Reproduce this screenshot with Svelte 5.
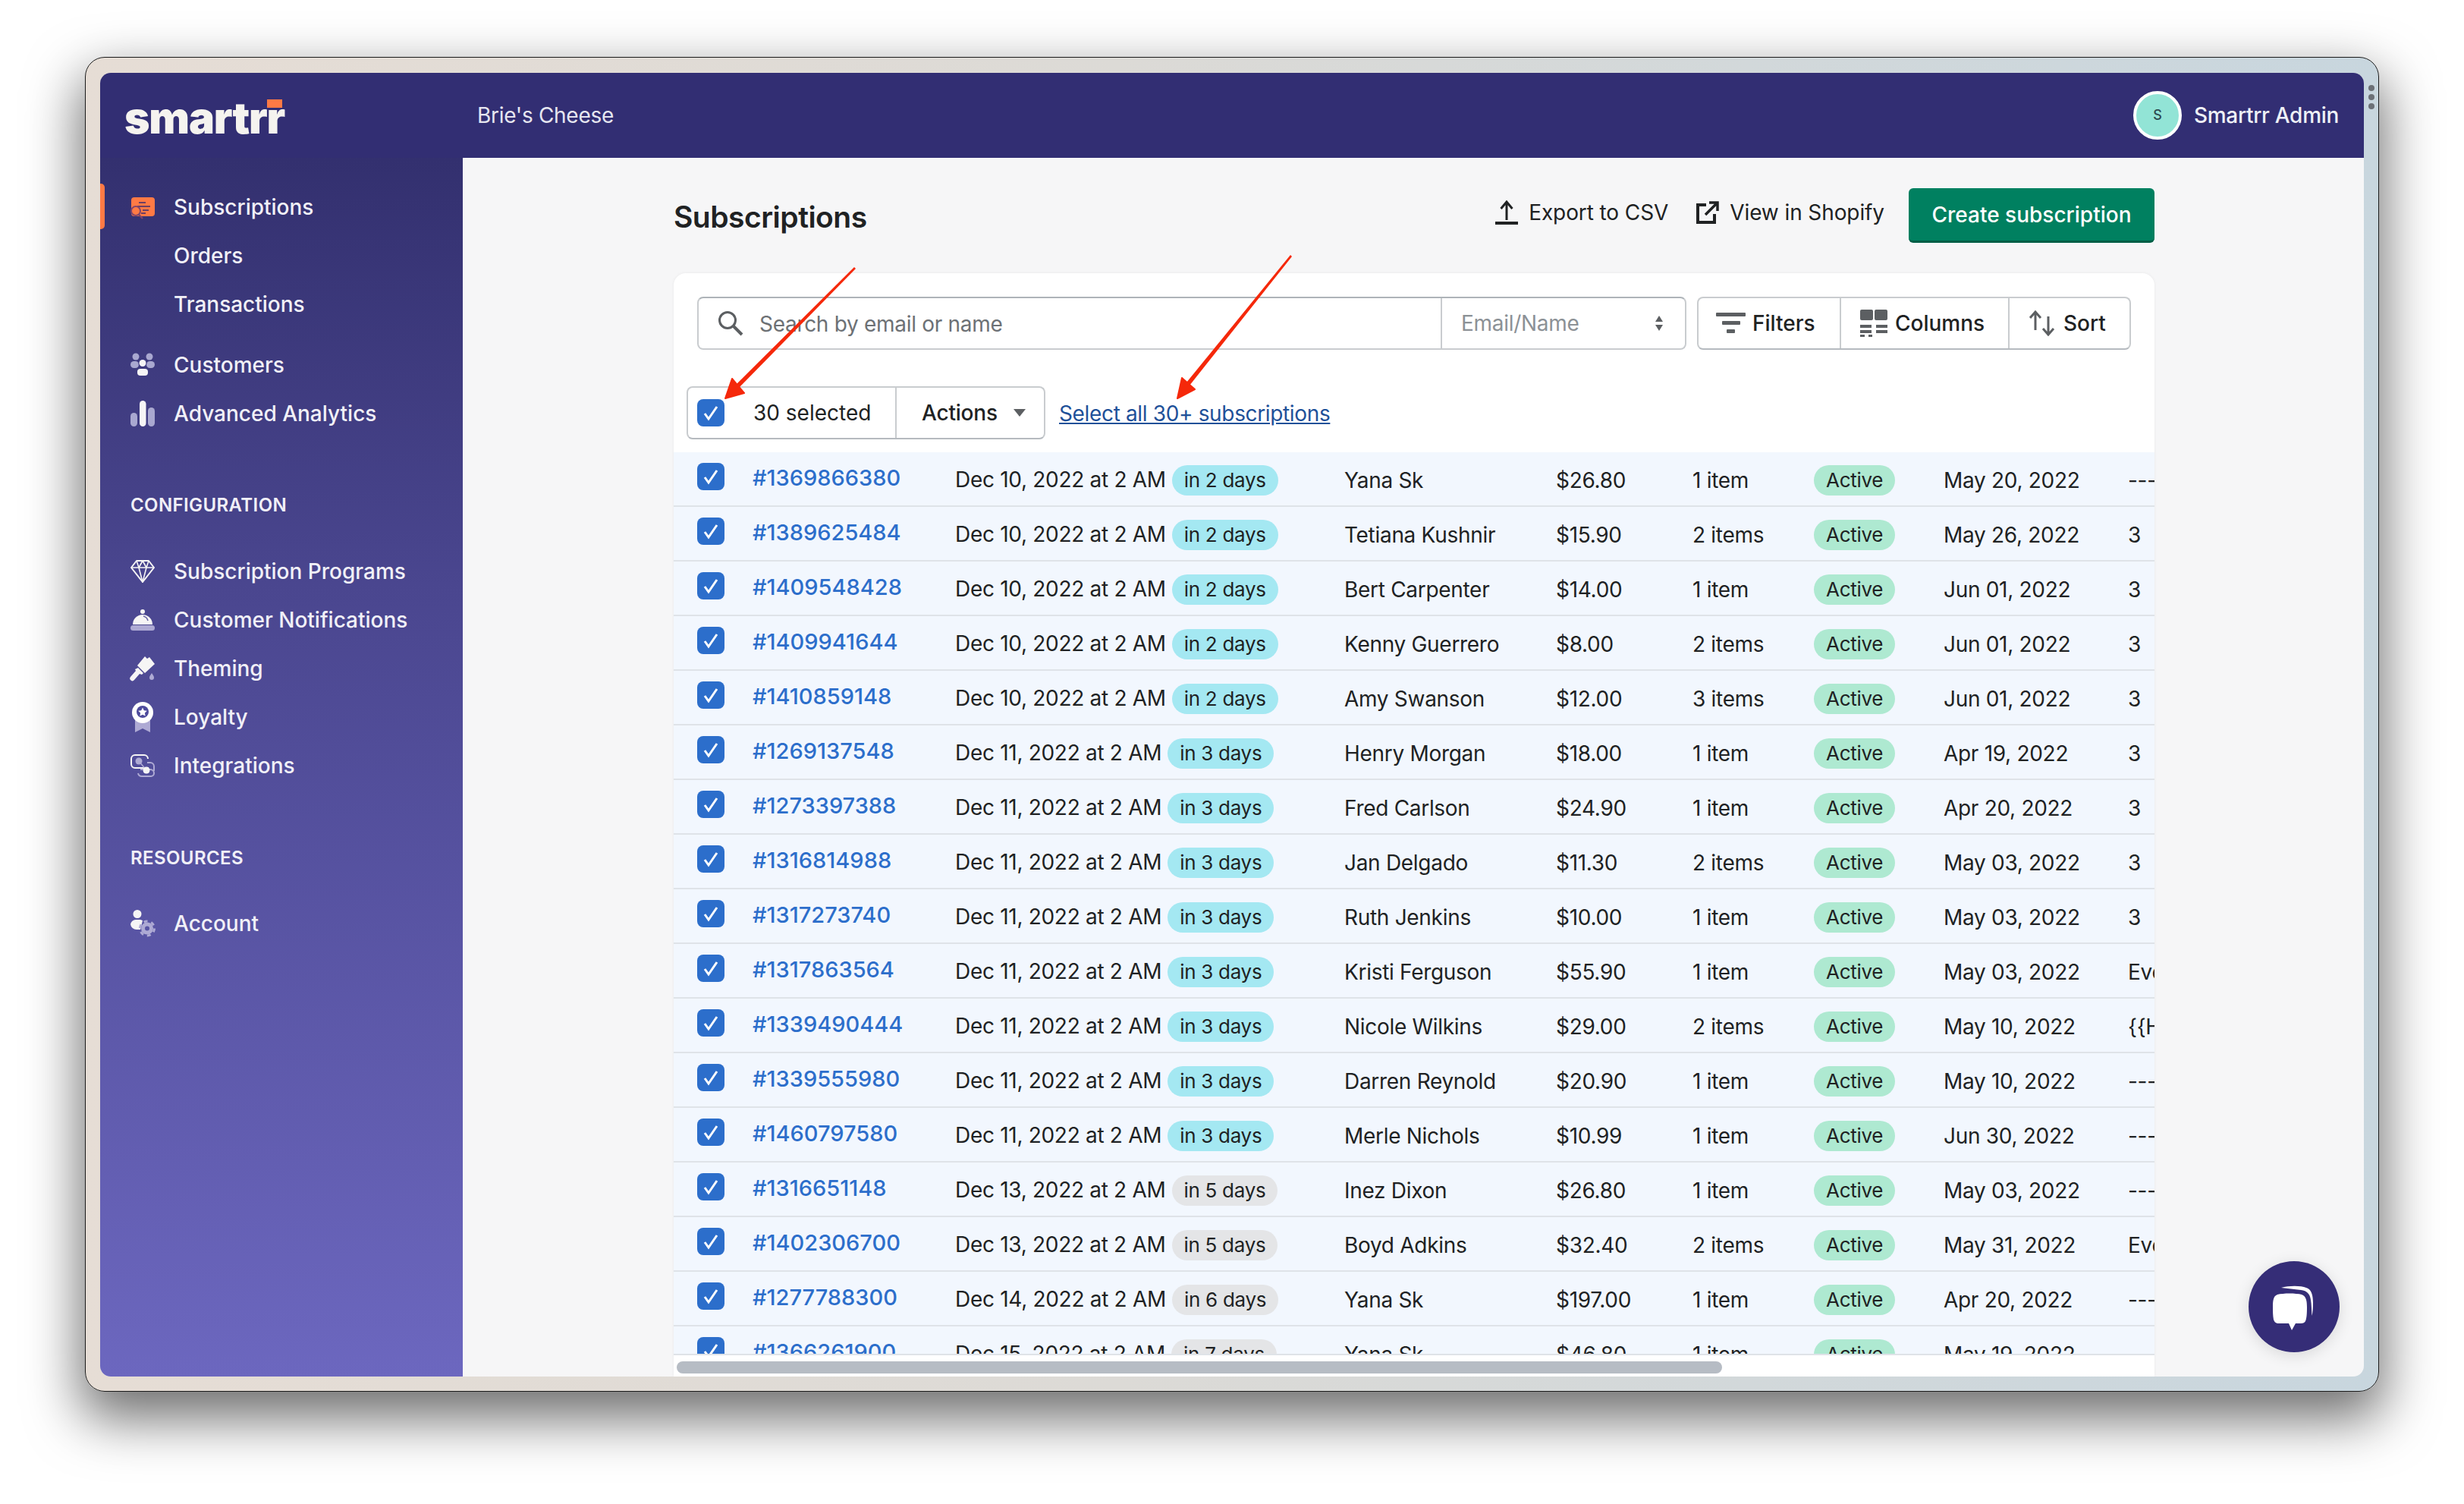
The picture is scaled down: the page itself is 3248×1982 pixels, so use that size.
<script>
  const rows = [
    ["1369866380", "Dec 10", 2, "Yana Sk", "$26.80", "1 item", "May 20, 2022", "---"],
    ["1389625484", "Dec 10", 2, "Tetiana Kushnir", "$15.90", "2 items", "May 26, 2022", "3"],
    ["1409548428", "Dec 10", 2, "Bert Carpenter", "$14.00", "1 item", "Jun 01, 2022", "3"],
    ["1409941644", "Dec 10", 2, "Kenny Guerrero", "$8.00", "2 items", "Jun 01, 2022", "3"],
    ["1410859148", "Dec 10", 2, "Amy Swanson", "$12.00", "3 items", "Jun 01, 2022", "3"],
    ["1269137548", "Dec 11", 3, "Henry Morgan", "$18.00", "1 item", "Apr 19, 2022", "3"],
    ["1273397388", "Dec 11", 3, "Fred Carlson", "$24.90", "1 item", "Apr 20, 2022", "3"],
    ["1316814988", "Dec 11", 3, "Jan Delgado", "$11.30", "2 items", "May 03, 2022", "3"],
    ["1317273740", "Dec 11", 3, "Ruth Jenkins", "$10.00", "1 item", "May 03, 2022", "3"],
    ["1317863564", "Dec 11", 3, "Kristi Ferguson", "$55.90", "1 item", "May 03, 2022", "Every"],
    ["1339490444", "Dec 11", 3, "Nicole Wilkins", "$29.00", "2 items", "May 10, 2022", "{{H"],
    ["1339555980", "Dec 11", 3, "Darren Reynold", "$20.90", "1 item", "May 10, 2022", "---"],
    ["1460797580", "Dec 11", 3, "Merle Nichols", "$10.99", "1 item", "Jun 30, 2022", "---"],
    ["1316651148", "Dec 13", 5, "Inez Dixon", "$26.80", "1 item", "May 03, 2022", "---"],
    ["1402306700", "Dec 13", 5, "Boyd Adkins", "$32.40", "2 items", "May 31, 2022", "Every"],
    ["1277788300", "Dec 14", 6, "Yana Sk", "$197.00", "1 item", "Apr 20, 2022", "---"],
    ["1366261900", "Dec 15", 7, "Yana Sk", "$46.80", "1 item", "May 19, 2022", "---"],
  ];
</script>

<div class="page">
  <div class="frame">
    <div class="dots"><i></i><i></i><i></i></div>
    <div class="app">
      <header class="topbar">
        <div class="logo"><span class="logo-mark"></span>smartrr</div>
        <div class="shop">Brie's Cheese</div>
        <div class="user">
          <div class="avatar">S</div>
          <span>Smartrr Admin</span>
        </div>
      </header>

      <div class="body">
        <nav class="sidebar">
          <a class="nav active">
            <svg width="32" height="32" viewBox="0 0 32 32">
              <rect x="1" y="3" width="31" height="25" rx="4" fill="#ff7a45" />
              <path d="M11 10h9M9 15h17M16 20h8M14 24h6" stroke="#6d3f63" stroke-width="2" fill="none" />
              <circle cx="7" cy="21" r="6" fill="#ff7a45" stroke="#80456a" stroke-width="2" />
              <path d="M11 26l5 5" stroke="#80456a" stroke-width="2.4" />
            </svg>
            Subscriptions
          </a>
          <a class="nav"><span class="blank"></span>Orders</a>
          <a class="nav"><span class="blank"></span>Transactions</a>

          <a class="nav group">
            <svg width="32" height="32" viewBox="0 0 32 32">
              <circle cx="7" cy="5" r="4.5" fill="#a9a8d0" />
              <circle cx="25" cy="5" r="4.5" fill="#a9a8d0" />
              <rect x="0" y="11" width="11" height="9" rx="4.5" fill="#a9a8d0" />
              <rect x="21" y="11" width="11" height="9" rx="4.5" fill="#a9a8d0" />
              <circle cx="16" cy="13.5" r="5.5" fill="#3a3680" />
              <circle cx="16" cy="13.5" r="4.5" fill="#f6f5f5" />
              <path d="M9 25a4 4 0 0 1 4-4h6a4 4 0 0 1 4 4v1a4 4 0 0 1-4 4h-6a4 4 0 0 1-4-4z" fill="#f6f5f5" />
            </svg>
            Customers
          </a>
          <a class="nav">
            <svg width="32" height="34" viewBox="0 0 32 34">
              <rect x="0" y="16" width="9" height="18" rx="4.5" fill="#a9a8d0" />
              <rect x="12" y="0" width="8.5" height="34" rx="4.25" fill="#f6f5f5" />
              <rect x="23" y="9" width="9" height="25" rx="4.5" fill="#a9a8d0" />
            </svg>
            Advanced Analytics
          </a>

          <div class="label first">Configuration</div>
          <a class="nav">
            <svg width="32" height="32" viewBox="0 0 32 32" fill="none" stroke="#f6f5f5" stroke-width="2" stroke-linejoin="round">
              <path d="M8 2h16l7 9-15 19L1 11z" />
              <path d="M1 11h30M8 2l3 9 5 19 5-19 3-9M11 11l5-9 5 9" stroke-width="1.6" />
            </svg>
            Subscription Programs
          </a>
          <a class="nav">
            <svg width="32" height="28" viewBox="0 0 32 28">
              <circle cx="16" cy="3" r="3" fill="#f6f5f5" />
              <path d="M3 20a13 13 0 0 1 26 0z" fill="#f6f5f5" />
              <path d="M17 9a8 8 0 0 1 6 6" stroke="#6b67a6" stroke-width="1.6" fill="none" />
              <rect x="0" y="21" width="32" height="7" rx="3.5" fill="#aeaad4" />
            </svg>
            Customer Notifications
          </a>
          <a class="nav">
            <svg width="32" height="32" viewBox="0 0 32 32">
              <path d="M19 0l3 3 3-2 7 9-13 12-10-10z" fill="#f6f5f5" />
              <path d="M10 15l7 7-2 2-3-1-7 8a3 3 0 0 1-5-4l7-8-1-2z" fill="#f6f5f5" />
              <path d="M28 22c2 3 3 4.500 3 6a3 3 0 0 1-6 0c0-1.500 1-3 3-6z" fill="#aeaad4" />
            </svg>
            Theming
          </a>
          <a class="nav">
            <svg width="32" height="40" viewBox="0 0 32 40">
              <path d="M6 24h20v16l-10-5-10 5z" fill="#aeaad4" />
              <circle cx="16" cy="14" r="14" fill="#fff" />
              <circle cx="16" cy="13" r="8" fill="#4d4a9c" />
              <path d="M16 7.500l1.800 3.700 4 .6-2.900 2.800.7 4-3.600-1.900-3.600 1.900.7-4-2.900-2.800 4-.6z" fill="#fff" />
            </svg>
            Loyalty
          </a>
          <a class="nav">
            <svg width="32" height="30" viewBox="0 0 32 30" fill="none">
              <path d="M13 20h13a5 5 0 0 1 5 5v0a4 4 0 0 1-4 4H15a5 5 0 0 1-5-4M31 22V16a5 5 0 0 0-5-5h-4" stroke="#aeaad4" stroke-width="2" />
              <path d="M24 18H6a5 5 0 0 1-5-5V6a5 5 0 0 1 5-5h12a5 5 0 0 1 5 5" stroke="#f6f5f5" stroke-width="2" />
              <circle cx="11" cy="9" r="4.500" fill="#aeaad4" />
              <path d="M11 9l10 12" stroke="#aeaad4" stroke-width="1.500" />
              <circle cx="21" cy="21" r="4.500" fill="#f6f5f5" />
            </svg>
            Integrations
          </a>

          <div class="label">Resources</div>
          <a class="nav">
            <svg width="32" height="36" viewBox="0 0 32 36">
              <circle cx="9" cy="5.500" r="5.500" fill="#f6f5f5" />
              <path d="M0 19a7 7 0 0 1 7-6h6l3 1-3 12h-5a8 8 0 0 1-8-7z" fill="#f6f5f5" />
              <circle cx="22" cy="24.500" r="5.500" fill="none" stroke="#aeaad4" stroke-width="5" />
              <circle cx="22" cy="24.500" r="9.500" fill="none" stroke="#aeaad4" stroke-width="3" stroke-dasharray="5 5" />
            </svg>
            Account
          </a>
        </nav>

        <main class="main">
          <div class="page-head">
            <h1>Subscriptions</h1>
            <div class="head-actions">
              <span class="plain">
                <svg width="30" height="32" viewBox="0 0 30 32">
                  <path d="M15 26V4M7.500 11L15 2l7.500 9" fill="none" stroke="#202223" stroke-width="3" />
                  <rect x="0" y="28" width="30" height="4" fill="#202223" />
                </svg>
                Export to CSV
              </span>
              <span class="plain">
                <svg width="30" height="30" viewBox="0 0 30 30" fill="none" stroke="#202223" stroke-width="4">
                  <path d="M13 5H2v23h22V17" />
                  <path d="M12 18L27 3M17 2h11v11" stroke-width="3.500" />
                </svg>
                View in Shopify
              </span>
              <button class="primary">Create subscription</button>
            </div>
          </div>

          <section class="card">
            <div class="filters">
              <div class="search">
                <svg class="search-icon" width="34" height="34" viewBox="0 0 34 34" fill="none" stroke="#5c5f62" stroke-width="3">
                  <circle cx="13" cy="13" r="10.500" />
                  <path d="M21 21l11 11" stroke-width="4" />
                </svg>
                <span class="placeholder">Search by email or name</span>
                <div class="select">
                  <span>Email/Name</span>
                  <svg width="12" height="20" viewBox="0 0 12 20" fill="#5c5f62">
                    <path d="M6 0l5 8H1zM6 20l-5-8h10z" />
                  </svg>
                </div>
              </div>
              <div class="btn-group">
                <button class="b-filters">
                  <svg width="39" height="28" viewBox="0 0 39 28" fill="#5c5f62">
                    <rect width="39" height="5" rx="1" />
                    <rect x="8" y="11" width="24" height="5" rx="1" />
                    <rect x="14" y="22" width="11" height="5" rx="1" />
                  </svg>
                  Filters
                </button>
                <button class="b-columns">
                  <svg width="36" height="36" viewBox="0 0 36 36" fill="#5c5f62">
                    <rect width="17" height="14" rx="2" />
                    <rect x="19" width="17" height="14" rx="2" />
                    <path d="M0 20h15v4H0zM21 20h15v4H21zM0 27h15v4H0zM21 27h15v4H21zM0 33h6v3H0zM11 33h5v3h-5z" />
                  </svg>
                  Columns
                </button>
                <button class="b-sort">
                  <svg width="34" height="34" viewBox="0 0 34 34" fill="none" stroke="#5c5f62" stroke-width="3">
                    <path d="M8 26V3M1 10l7-8 7 8" />
                    <path d="M25 8v23M18 24l7 8 7-8" />
                  </svg>
                  Sort
                </button>
              </div>
            </div>

            <div class="bulk">
              <div class="bulk-group">
                <div class="bulk-count">
                  <span class="check">
                    <svg width="24" height="24" viewBox="0 0 24 24" fill="none" stroke="#fff" stroke-width="3"><path d="M4 13l5 7 11-16" /></svg>
                  </span>
                  <span>30 selected</span>
                </div>
                <div class="bulk-actions">
                  Actions
                  <svg width="16" height="10" viewBox="0 0 16 10" fill="#5c5f62"><path d="M0 0h16l-8 10z" /></svg>
                </div>
              </div>
              <a class="select-all">Select all 30+ subscriptions</a>
            </div>

            <div class="table">
              {#each rows as r}
                <div class="row">
                  <div class="cell-check">
                    <span class="check">
                      <svg width="24" height="24" viewBox="0 0 24 24" fill="none" stroke="#fff" stroke-width="3"><path d="M4 13l5 7 11-16" /></svg>
                    </span>
                  </div>
                  <a class="order">#{r[0]}</a>
                  <div>{r[1]}, 2022 at 2 AM<span class="badge" class:soon={r[2] < 5}>in {r[2]} days</span></div>
                  <div>{r[3]}</div>
                  <div>{r[4]}</div>
                  <div>{r[5]}</div>
                  <div><span class="badge active">Active</span></div>
                  <div>{r[6]}</div>
                  <div>{r[7]}</div>
                </div>
              {/each}
            </div>
            <div class="scroll"><div class="thumb"></div></div>
          </section>
        </main>
      </div>

      <div class="chat">
        <svg width="64" height="62" viewBox="0 0 64 62" fill="#fff">
          <path d="M15 6c10-3 26-3 33 0 7 2 9 10 9 20 0 7-.5 13-1.500 17-.5-8-.5-15-1.500-21-1-8-5-12-13-13-9-1-17-2-26-3z" />
          <path d="M10 15c8-2 24-2 32 0 6 2 7 8 7 17 0 8-.5 15-2 18-1 2-3 3-6 3H34l-5 9-4-9H12c-4 0-6-2-7-5-1-5-1-11-1-17 0-9 1-14 6-16z" />
        </svg>
      </div>
    </div>
  </div>

  <svg class="arrows" width="3248" height="1982" viewBox="0 0 3248 1982">
    <path d="M1128 354L975 510 971 506 1126 352z" fill="#f5280a" />
    <path d="M956 525L965 499 981 518z" fill="#f5280a" stroke="#f5280a" stroke-width="2" stroke-linejoin="round" />
    <path d="M1703 338L1568 508 1564 504 1701 336z" fill="#f5280a" />
    <path d="M1552 525L1558 498 1575 513z" fill="#f5280a" stroke="#f5280a" stroke-width="2" stroke-linejoin="round" />
  </svg>
</div>

<style>
  :global(body) {
    margin: 0;
    background: #fff;
  }

  .page {
    position: relative;
    width: 3248px;
    height: 1982px;
    padding: 75px 112px 0;
    box-sizing: border-box;
    font-family: Inter, "Liberation Sans", sans-serif;
    font-size: 28px;
    color: #202223;
    overflow: hidden;
  }

  .frame {
    position: relative;
    width: 3024px;
    height: 1759px;
    box-sizing: border-box;
    padding: 20px 19px 19px;
    border: 1px solid #1a1a1a;
    border-radius: 26px;
    background: linear-gradient(90deg, #e6ddd5, #dcdad6 45%, #c8d6de);
    box-shadow: 0 30px 70px 6px rgba(0, 0, 0, 0.56);
  }

  .dots {
    position: absolute;
    right: 5px;
    top: 36px;
    display: flex;
    flex-direction: column;
    gap: 4px;
  }
  .dots i {
    width: 8px;
    height: 8px;
    border-radius: 50%;
    background: #6c7076;
  }

  .app {
    position: relative;
    height: 100%;
    border-radius: 14px;
    overflow: hidden;
    display: flex;
    flex-direction: column;
    background: #f6f6f7;
  }

  .topbar {
    flex: 0 0 112px;
    display: flex;
    align-items: center;
    background: #322e73;
    color: #eef0f6;
  }

  .logo {
    position: relative;
    width: 465px;
    padding-left: 32px;
    box-sizing: border-box;
    font-size: 57px;
    font-weight: 900;
    letter-spacing: -1.2px;
    color: #f5f3ef;
    line-height: 56px;
    margin-top: 8px;
  }
  .logo-mark {
    position: absolute;
    left: 220px;
    top: 3px;
    width: 20px;
    height: 11px;
    background: #ff7a45;
  }

  .shop {
    margin-left: 32px;
    flex: 1;
    color: #e6e6f0;
    letter-spacing: -0.3px;
    margin-top: -1px;
  }

  .user {
    display: flex;
    align-items: center;
    gap: 16px;
    padding-right: 33px;
    font-weight: 500;
    letter-spacing: -0.3px;
    margin-top: -1px;
  }
  .avatar {
    width: 64px;
    height: 64px;
    box-sizing: border-box;
    border: 4px solid #fff;
    border-radius: 50%;
    background: #92e4d6;
    color: #2e4a50;
    font-size: 18px;
    display: flex;
    align-items: center;
    justify-content: center;
  }

  .body {
    flex: 1;
    display: flex;
    min-height: 0;
  }

  .sidebar {
    flex: 0 0 478px;
    box-sizing: border-box;
    padding-top: 33px;
    background: linear-gradient(180deg, #33306f 0%, #4a468f 35%, #6c67bf 100%);
    color: #f1f0f7;
  }

  .nav {
    position: relative;
    height: 64px;
    display: flex;
    align-items: center;
    gap: 25px;
    padding-left: 40px;
    font-weight: 500;
  }
  .nav.group {
    margin-top: 16px;
  }
  .nav svg {
    flex: 0 0 32px;
    overflow: visible;
  }
  .nav.active::before {
    content: "";
    position: absolute;
    left: 0;
    top: 1px;
    width: 6px;
    height: 60px;
    border-radius: 0 5px 5px 0;
    background: #ff7a45;
  }
  .blank {
    width: 32px;
  }

  .label {
    margin: 73px 0 37px 40px;
    height: 34px;
    line-height: 34px;
    font-size: 24px;
    font-weight: 600;
    letter-spacing: 0.4px;
    text-transform: uppercase;
  }
  .label.first {
    margin-top: 72px;
    margin-bottom: 38px;
  }

  .main {
    flex: 1;
    min-width: 0;
    padding: 40px 276px 0 278px;
  }

  .page-head {
    display: flex;
    align-items: center;
    justify-content: space-between;
    height: 72px;
  }
  h1 {
    margin: 0 0 -2px;
    font-size: 39px;
    font-weight: 600;
    letter-spacing: -0.5px;
  }

  .head-actions {
    display: flex;
    align-items: center;
  }
  .plain {
    display: flex;
    align-items: center;
    gap: 14px;
    margin-right: 37px;
    margin-top: -8px;
    letter-spacing: -0.1px;
  }
  .plain + .plain {
    margin-right: 32px;
  }

  button {
    font: inherit;
    color: inherit;
    font-weight: 500;
  }

  .primary {
    width: 324px;
    height: 72px;
    padding: 0;
    border: 0;
    border-bottom: 3px solid #005e46;
    border-radius: 6px;
    background: #008060;
    color: #fff;
  }

  .card {
    margin-top: 40px;
    height: 1454px;
    border-radius: 16px 16px 0 0;
    background: #fff;
    box-shadow: 0 0 4px rgba(23, 24, 24, 0.06);
    overflow: hidden;
  }

  .filters {
    display: flex;
    gap: 14px;
    padding: 31px 31px 0 31px;
  }

  .search {
    flex: 0 0 1304px;
    height: 70px;
    box-sizing: border-box;
    border: 2px solid #c9cccf;
    border-top-color: #aeb4b9;
    border-radius: 8px;
    display: flex;
    align-items: center;
    padding-left: 25px;
  }
  .search-icon {
    flex: none;
  }
  .placeholder {
    flex: 1;
    margin-left: 21px;
    color: #6d7175;
    letter-spacing: -0.3px;
    margin-top: 2px;
  }

  .select {
    flex: 0 0 320px;
    height: 100%;
    border-left: 2px solid #c9cccf;
    display: flex;
    align-items: center;
    justify-content: space-between;
    color: #8c9196;
    letter-spacing: -0.3px;
  }
  .select span {
    margin-left: 25px;
  }
  .select svg {
    margin-right: 28px;
  }

  .btn-group {
    display: flex;
    height: 70px;
    width: 572px;
    box-sizing: border-box;
    border: 2px solid #c9cccf;
    border-bottom-color: #b5babf;
    border-radius: 8px;
  }
  .btn-group button {
    display: flex;
    align-items: center;
    padding: 0;
    border: 0;
    background: none;
    border-right: 2px solid #c9cccf;
    box-sizing: border-box;
  }
  .btn-group button:last-child {
    border-right: 0;
  }
  .btn-group .b-filters {
    width: 188px;
    gap: 9px;
    padding-left: 23px;
  }
  .btn-group .b-columns {
    width: 222px;
    gap: 10px;
    padding-left: 25px;
  }
  .btn-group .b-sort {
    flex: 1;
    gap: 11px;
    padding-left: 26px;
  }

  .bulk {
    display: flex;
    align-items: center;
    gap: 18px;
    padding: 48px 0 17px 17px;
  }
  .bulk-group {
    display: flex;
    width: 473px;
    height: 70px;
    box-sizing: border-box;
    border: 2px solid #c9cccf;
    border-bottom-color: #b5babf;
    border-radius: 8px;
  }
  .bulk-count {
    width: 275px;
    display: flex;
    align-items: center;
    padding-left: 12px;
    gap: 38px;
    box-sizing: border-box;
    border-right: 2px solid #c9cccf;
  }
  .bulk-actions {
    flex: 1;
    display: flex;
    align-items: center;
    gap: 21px;
    padding-left: 33px;
    font-weight: 500;
    letter-spacing: -0.2px;
  }
  .select-all {
    color: #1f5199;
    text-decoration: underline;
    letter-spacing: -0.35px;
    margin-top: 2px;
  }

  .check {
    flex: none;
    width: 36px;
    height: 36px;
    border-radius: 8px;
    background: #2c6ecb;
    display: flex;
    align-items: center;
    justify-content: center;
  }

  .table {
    height: 1190px;
    overflow: hidden;
    border-bottom: 2px solid #dfe3e8;
    box-sizing: border-box;
  }

  .row {
    display: grid;
    grid-template-columns: 104px 267px 513px 279px 180px 160px 171px 243px 300px;
    align-items: center;
    width: 2217px;
    height: 72px;
    box-sizing: border-box;
    border-bottom: 2px solid #dfe3e8;
    background: #f2f7fe;
    white-space: nowrap;
    padding-top: 4px;
    letter-spacing: -0.3px;
  }

  .cell-check {
    padding-left: 31px;
    margin-top: -10px;
  }

  .order {
    color: #2c6ecb;
    font-size: 29px;
    font-weight: 500;
    letter-spacing: 0;
    margin-top: -8px;
  }

  .badge {
    display: inline-block;
    margin-left: 8px;
    padding: 0 16px;
    height: 40px;
    line-height: 40px;
    border-radius: 20px;
    background: #e4e5e7;
    font-size: 26px;
  }
  .badge.soon {
    background: #a4e8f2;
  }
  .badge.active {
    margin-left: 0;
    background: #aee9d1;
  }

  .scroll {
    padding: 8px 4px 0;
    height: 20px;
  }
  .thumb {
    width: 1378px;
    height: 16px;
    border-radius: 8px;
    background: #b6bcc4;
  }

  .chat {
    position: absolute;
    right: 32px;
    bottom: 32px;
    width: 120px;
    height: 120px;
    border-radius: 50%;
    background: #352d77;
    box-shadow: 0 4px 20px rgba(0, 0, 0, 0.12);
    display: flex;
    align-items: center;
    justify-content: center;
  }

  .arrows {
    position: absolute;
    left: 0;
    top: 0;
    pointer-events: none;
  }
</style>
